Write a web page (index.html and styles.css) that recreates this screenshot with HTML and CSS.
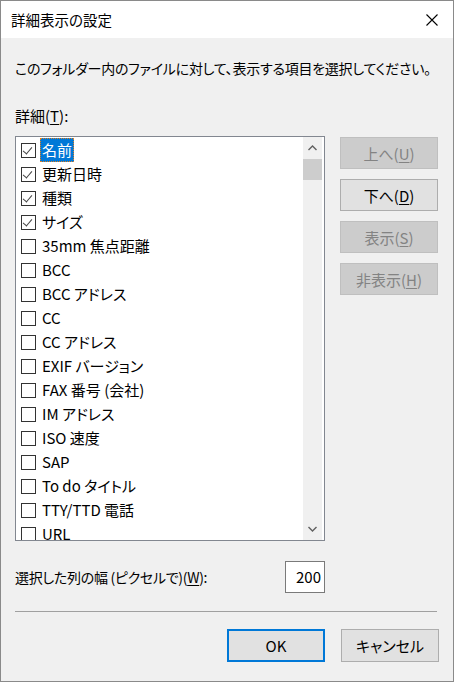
FILE: index.html
```html
<!DOCTYPE html>
<html lang="ja">
<head>
    <meta charset="UTF-8">
    <title>詳細表示の設定</title>
    <link rel="stylesheet" href="styles.css">
</head>
<body>
    <div class="window">
        <div class="titlebar">
            <span class="title">詳細表示の設定</span>
            <span class="close">
                <svg width="12" height="12" viewBox="0 0 12 12"><path d="M0.5 0.5 L11.5 11.5 M11.5 0.5 L0.5 11.5" stroke="#000" stroke-width="1.1" fill="none"/></svg>
            </span>
        </div>

        <div class="content">
            <p class="intro">このフォルダー内のファイルに対して、表示する項目を選択してください。</p>
            <p class="label">詳細(<u>T</u>):</p>

            <div class="main">
                <div class="listbox">
                    <ul class="items">
                        <li class="checked selected"><span class="box"></span><span class="text">名前</span></li>
                        <li class="checked"><span class="box"></span><span class="text">更新日時</span></li>
                        <li class="checked"><span class="box"></span><span class="text">種類</span></li>
                        <li class="checked"><span class="box"></span><span class="text">サイズ</span></li>
                        <li><span class="box"></span><span class="text">35mm 焦点距離</span></li>
                        <li><span class="box"></span><span class="text">BCC</span></li>
                        <li><span class="box"></span><span class="text">BCC アドレス</span></li>
                        <li><span class="box"></span><span class="text">CC</span></li>
                        <li><span class="box"></span><span class="text">CC アドレス</span></li>
                        <li><span class="box"></span><span class="text">EXIF バージョン</span></li>
                        <li><span class="box"></span><span class="text">FAX 番号 (会社)</span></li>
                        <li><span class="box"></span><span class="text">IM アドレス</span></li>
                        <li><span class="box"></span><span class="text">ISO 速度</span></li>
                        <li><span class="box"></span><span class="text">SAP</span></li>
                        <li><span class="box"></span><span class="text">To do タイトル</span></li>
                        <li><span class="box"></span><span class="text">TTY/TTD 電話</span></li>
                        <li><span class="box"></span><span class="text">URL</span></li>
                    </ul>
                    <div class="scrollbar">
                        <span class="arrow">
                            <svg width="9" height="6" viewBox="0 0 9 6"><path d="M0.5 5 L4.5 1 L8.5 5" stroke="#606060" stroke-width="1.4" fill="none"/></svg>
                        </span>
                        <span class="thumb"></span>
                        <span class="track"></span>
                        <span class="arrow">
                            <svg width="9" height="6" viewBox="0 0 9 6"><path d="M0.5 1 L4.5 5 L8.5 1" stroke="#606060" stroke-width="1.4" fill="none"/></svg>
                        </span>
                    </div>
                </div>

                <div class="side">
                    <button class="btn" disabled>上へ(<u>U</u>)</button>
                    <button class="btn">下へ(<u>D</u>)</button>
                    <button class="btn" disabled>表示(<u>S</u>)</button>
                    <button class="btn" disabled>非表示(<u>H</u>)</button>
                </div>
            </div>

            <div class="width-row">
                <span class="width-label">選択した列の幅 (ピクセルで)(<u>W</u>):</span>
                <span class="field">200</span>
            </div>

            <div class="separator"></div>

            <div class="footer">
                <button class="btn default">OK</button>
                <button class="btn">キャンセル</button>
            </div>
        </div>
    </div>
</body>
</html>
```

FILE: styles.css
```css
* {
    box-sizing: border-box;
    margin: 0;
    padding: 0;
}

body {
    width: 454px;
    height: 682px;
    font-family: "Noto Sans CJK JP", "Noto Sans", sans-serif;
    font-size: 15px;
    font-feature-settings: "palt";
    color: #000;
    background: #f0f0f0;
}

.window {
    width: 454px;
    height: 682px;
    border: 1px solid #8a8a8a;
    display: flex;
    flex-direction: column;
    background: #f0f0f0;
}

.titlebar {
    height: 37px;
    background: #fff;
    display: flex;
    align-items: center;
    justify-content: space-between;
    padding: 0 15px 0 10px;
}

.title {
    font-size: 14.5px;
    line-height: 20px;
}

.close {
    display: flex;
    width: 12px;
    height: 12px;
    margin-top: 1px;
}

.content {
    flex: 1;
    padding: 0 14px 0 14px;
}

.intro {
    margin-top: 20px;
    line-height: 20px;
    font-size: 14px;
    letter-spacing: -0.25px;
    white-space: nowrap;
}

.label {
    margin-top: 28px;
    line-height: 20px;
}

u {
    text-decoration: underline;
    text-underline-offset: 2px;
}

.main {
    display: flex;
    gap: 15px;
    margin-top: 10px;
}

.listbox {
    width: 310px;
    height: 405px;
    border: 1px solid #828790;
    background: #fff;
    display: flex;
    overflow: hidden;
}

.items {
    list-style: none;
    flex: 1;
    padding-top: 1px;
}

.items li {
    height: 24px;
    display: flex;
    align-items: center;
    padding-left: 5px;
    white-space: nowrap;
}

.box {
    width: 15px;
    height: 15px;
    border: 1px solid #333;
    background: #fff;
    flex: none;
    position: relative;
}

.checked .box::after {
    content: "";
    position: absolute;
    left: 3px;
    top: 1px;
    width: 4px;
    height: 8px;
    border-right: 1.2px solid #444;
    border-bottom: 1.2px solid #444;
    transform: rotate(40deg);
}

.text {
    margin-left: 4px;
    padding: 0 2px;
    line-height: 24px;
}

.selected .text {
    background: #0078d7;
    color: #fff;
    outline: 1px dotted #e08020;
    outline-offset: -1px;
}

.scrollbar {
    width: 21px;
    display: flex;
    flex-direction: column;
    background: #f0f0f0;
    border-right: 2px solid #fff;
}

.arrow {
    height: 22px;
    display: flex;
    align-items: center;
    justify-content: center;
    flex: none;
}

.thumb {
    height: 21px;
    background: #cdcdcd;
    flex: none;
}

.track {
    flex: 1;
}

.side {
    display: flex;
    flex-direction: column;
    gap: 10px;
    padding-top: 1px;
}

.btn {
    width: 98px;
    height: 32px;
    border: 1px solid #adadad;
    background: #e1e1e1;
    font: inherit;
    color: #000;
    font-feature-settings: "palt";
}

.btn:disabled {
    background: #cccccc;
    border-color: #bfbfbf;
    color: #838383;
}

.btn.default {
    border: 2px solid #0078d7;
}

.width-row {
    margin-top: 20px;
    display: flex;
    align-items: center;
    justify-content: space-between;
    width: 310px;
}

.width-label {
    font-size: 14px;
    letter-spacing: -0.3px;
}

.field {
    width: 40px;
    height: 32px;
    border: 1px solid #7a7a7a;
    background: #fff;
    text-align: right;
    padding-right: 3px;
    line-height: 30px;
}

.separator {
    margin-top: 18px;
    width: 422px;
    height: 1px;
    background: #a0a0a0;
}

.footer {
    margin-top: 17px;
    display: flex;
    justify-content: flex-end;
    gap: 16px;
    width: 424px;
}

.footer .btn {
    height: 33px;
}
```
